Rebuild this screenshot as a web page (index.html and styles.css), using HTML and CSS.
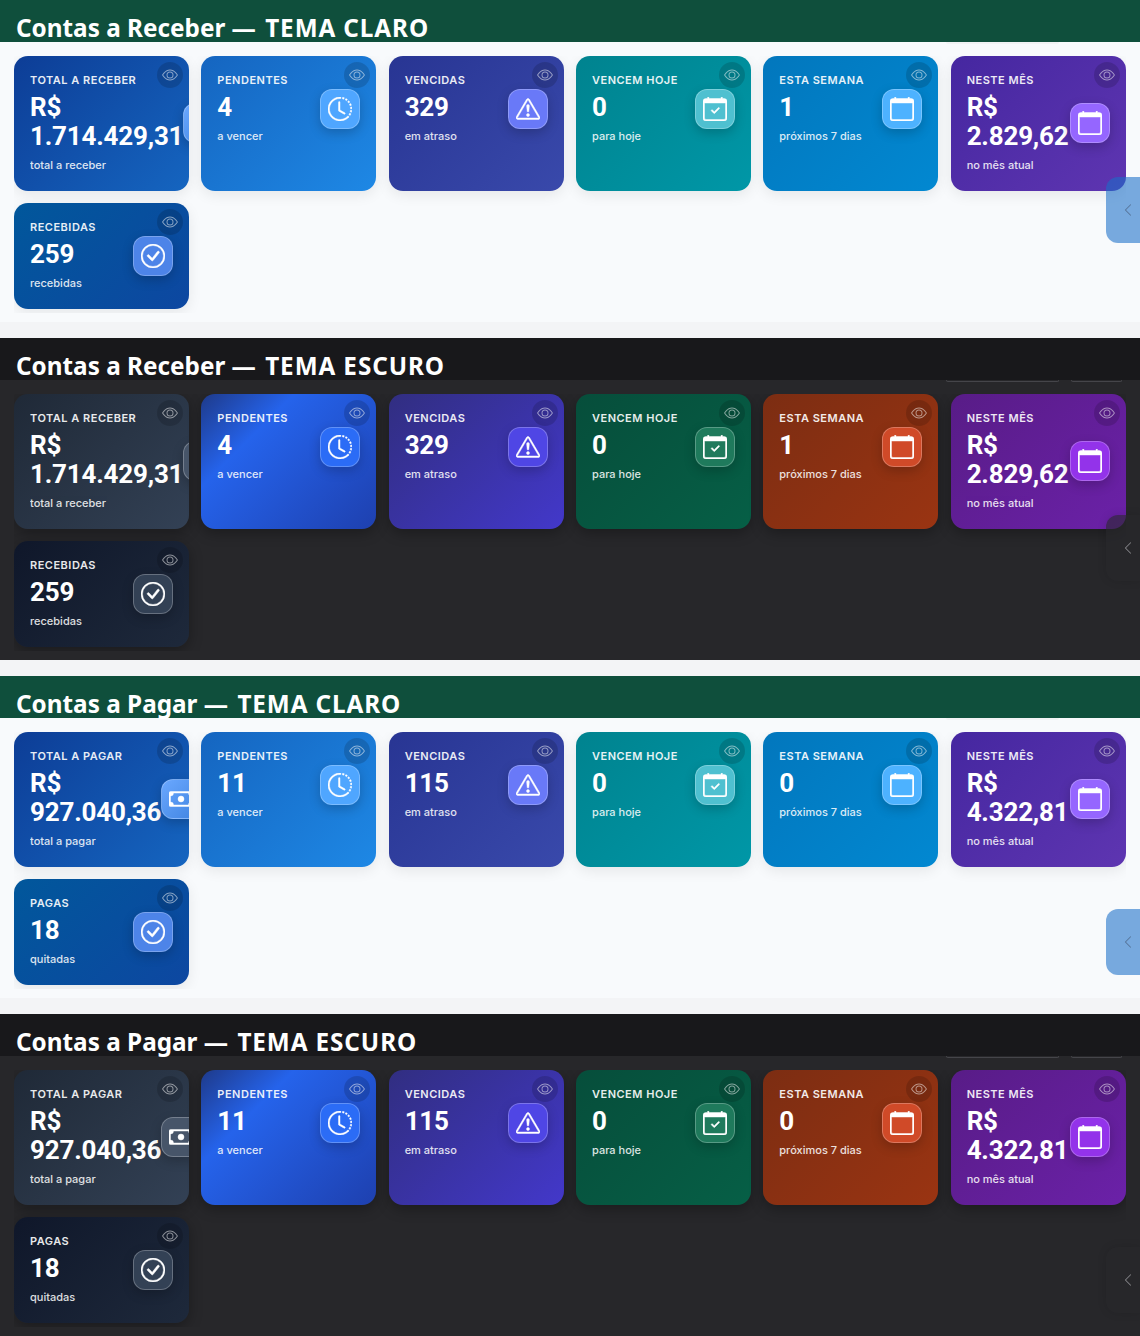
FILE: index.html
```html
<!DOCTYPE html>
<html lang="en">
<head>
    <meta charset="UTF-8">
    <meta name="viewport" content="width=device-width, initial-scale=1.0">
    <title>Contas - Temas</title>
    <link rel="stylesheet" href="styles.css">
</head>
<body>
    <svg class="sprite" xmlns="http://www.w3.org/2000/svg">
        <symbol id="i-eye" viewBox="0 0 16 16"><path d="M16 8s-3-5.5-8-5.5S0 8 0 8s3 5.5 8 5.5S16 8 16 8zM1.173 8a13.133 13.133 0 0 1 1.66-2.043C4.12 4.668 5.88 3.5 8 3.5c2.12 0 3.879 1.168 5.168 2.457A13.133 13.133 0 0 1 14.828 8c-.058.087-.122.183-.195.288-.335.48-.83 1.12-1.465 1.755C11.879 11.332 10.119 12.5 8 12.5c-2.12 0-3.879-1.168-5.168-2.457A13.134 13.134 0 0 1 1.172 8z"/><path d="M8 5.5a2.5 2.5 0 1 0 0 5 2.5 2.5 0 0 0 0-5zM4.5 8a3.5 3.5 0 1 1 7 0 3.5 3.5 0 0 1-7 0z"/></symbol>
        <symbol id="i-cash" viewBox="0 0 16 16"><path d="M8 10a2 2 0 1 0 0-4 2 2 0 0 0 0 4z"/><path d="M0 4a1 1 0 0 1 1-1h14a1 1 0 0 1 1 1v8a1 1 0 0 1-1 1H1a1 1 0 0 1-1-1V4zm3 0a2 2 0 0 1-2 2v4a2 2 0 0 1 2 2h10a2 2 0 0 1 2-2V6a2 2 0 0 1-2-2H3z"/></symbol>
        <symbol id="i-clock" viewBox="0 0 16 16"><path d="M8.515 1.019A7 7 0 0 0 8 1V0a8 8 0 0 1 .589.022l-.074.997zm2.004.45a7.003 7.003 0 0 0-.985-.299l.219-.976c.383.086.76.2 1.126.342l-.36.933zm1.37.71a7.01 7.01 0 0 0-.439-.27l.493-.87a8.025 8.025 0 0 1 .979.654l-.615.789a6.996 6.996 0 0 0-.418-.302zm1.834 1.79a6.99 6.99 0 0 0-.653-.796l.724-.69c.27.285.52.59.747.91l-.818.576zm.744 1.352a7.08 7.08 0 0 0-.214-.468l.893-.45a7.976 7.976 0 0 1 .45 1.088l-.95.313a7.023 7.023 0 0 0-.179-.483zm.53 2.507a6.991 6.991 0 0 0-.1-1.025l.985-.17c.067.386.106.778.116 1.17l-1 .025zm-.131 1.538c.033-.17.06-.339.081-.51l.993.123a7.957 7.957 0 0 1-.23 1.155l-.964-.267c.046-.165.086-.332.12-.501zm-.952 2.379c.184-.29.346-.594.486-.908l.914.405c-.16.36-.345.706-.555 1.038l-.845-.535zm-.964 1.205c.122-.122.239-.248.35-.378l.758.653a8.073 8.073 0 0 1-.401.432l-.707-.707z"/><path d="M8 1a7 7 0 1 0 4.95 11.95l.707.707A8.001 8.001 0 1 1 8 0v1z"/><path d="M7.5 3a.5.5 0 0 1 .5.5v5.21l3.248 1.856a.5.5 0 0 1-.496.868l-3.5-2A.5.5 0 0 1 7 9V3.5a.5.5 0 0 1 .5-.5z"/></symbol>
        <symbol id="i-alert" viewBox="0 0 16 16"><path d="M7.938 2.016A.13.13 0 0 1 8.002 2a.13.13 0 0 1 .063.016.146.146 0 0 1 .054.057l6.857 11.667c.036.06.035.124.002.183a.163.163 0 0 1-.054.06.116.116 0 0 1-.066.017H1.146a.115.115 0 0 1-.066-.017.163.163 0 0 1-.054-.06.176.176 0 0 1 .002-.183L7.884 2.073a.147.147 0 0 1 .054-.057zm1.044-.45a1.13 1.13 0 0 0-1.96 0L.165 13.233c-.457.778.091 1.767.98 1.767h13.713c.889 0 1.438-.99.98-1.767L8.982 1.566z"/><path d="M7.002 12a1 1 0 1 1 2 0 1 1 0 0 1-2 0zM7.1 5.995a.905.905 0 1 1 1.8 0l-.35 3.507a.552.552 0 0 1-1.1 0L7.1 5.995z"/></symbol>
        <symbol id="i-cal-check" viewBox="0 0 16 16"><path d="M10.854 7.146a.5.5 0 0 1 0 .708l-3 3a.5.5 0 0 1-.708 0l-1.5-1.5a.5.5 0 1 1 .708-.708L7.5 9.793l2.646-2.647a.5.5 0 0 1 .708 0z"/><path d="M3.5 0a.5.5 0 0 1 .5.5V1h8V.5a.5.5 0 0 1 1 0V1h1a2 2 0 0 1 2 2v11a2 2 0 0 1-2 2H2a2 2 0 0 1-2-2V3a2 2 0 0 1 2-2h1V.5a.5.5 0 0 1 .5-.5zM1 4v10a1 1 0 0 0 1 1h12a1 1 0 0 0 1-1V4H1z"/></symbol>
        <symbol id="i-cal" viewBox="0 0 16 16"><path d="M3.5 0a.5.5 0 0 1 .5.5V1h8V.5a.5.5 0 0 1 1 0V1h1a2 2 0 0 1 2 2v11a2 2 0 0 1-2 2H2a2 2 0 0 1-2-2V3a2 2 0 0 1 2-2h1V.5a.5.5 0 0 1 .5-.5zM1 4v10a1 1 0 0 0 1 1h12a1 1 0 0 0 1-1V4H1z"/></symbol>
        <symbol id="i-check" viewBox="0 0 16 16"><path d="M8 15A7 7 0 1 1 8 1a7 7 0 0 1 0 14zm0 1A8 8 0 1 0 8 0a8 8 0 0 0 0 16z"/><path d="M10.97 4.97a.235.235 0 0 0-.02.022L7.477 9.417 5.384 7.323a.75.75 0 0 0-1.06 1.06L6.97 11.03a.75.75 0 0 0 1.079-.02l3.992-4.99a.75.75 0 0 0-1.071-1.05z"/></symbol>
        <symbol id="i-chevron" viewBox="0 0 16 16"><path fill-rule="evenodd" d="M11.354 1.646a.5.5 0 0 1 0 .708L5.707 8l5.647 5.646a.5.5 0 0 1-.708.708l-6-6a.5.5 0 0 1 0-.708l6-6a.5.5 0 0 1 .708 0z"/></symbol>
    </svg>

    <!-- Contas a Receber, claro -->
    <section class="panel light">
        <h2 class="panel-title">Contas a Receber — <span class="theme-name">TEMA CLARO</span></h2>
        <span class="stub stub-a"></span>
        <div class="panel-body">
            <div class="cards">
                <div class="card total">
                    <span class="eye"><svg><use href="#i-eye"/></svg></span>
                    <div class="card-row">
                        <div class="card-text"><div class="label">Total a receber</div><div class="value">R$ 1.714.429,31</div><div class="sub">total a receber</div></div>
                        <div class="icon"><svg><use href="#i-cash"/></svg></div>
                    </div>
                </div>
                <div class="card pending">
                    <span class="eye"><svg><use href="#i-eye"/></svg></span>
                    <div class="card-row">
                        <div class="card-text"><div class="label">Pendentes</div><div class="value">4</div><div class="sub">a vencer</div></div>
                        <div class="icon"><svg><use href="#i-clock"/></svg></div>
                    </div>
                </div>
                <div class="card late">
                    <span class="eye"><svg><use href="#i-eye"/></svg></span>
                    <div class="card-row">
                        <div class="card-text"><div class="label">Vencidas</div><div class="value">329</div><div class="sub">em atraso</div></div>
                        <div class="icon"><svg><use href="#i-alert"/></svg></div>
                    </div>
                </div>
                <div class="card today">
                    <span class="eye"><svg><use href="#i-eye"/></svg></span>
                    <div class="card-row">
                        <div class="card-text"><div class="label">Vencem hoje</div><div class="value">0</div><div class="sub">para hoje</div></div>
                        <div class="icon"><svg><use href="#i-cal-check"/></svg></div>
                    </div>
                </div>
                <div class="card week">
                    <span class="eye"><svg><use href="#i-eye"/></svg></span>
                    <div class="card-row">
                        <div class="card-text"><div class="label">Esta semana</div><div class="value">1</div><div class="sub">próximos 7 dias</div></div>
                        <div class="icon"><svg><use href="#i-cal"/></svg></div>
                    </div>
                </div>
                <div class="card month">
                    <span class="eye"><svg><use href="#i-eye"/></svg></span>
                    <div class="card-row">
                        <div class="card-text"><div class="label">Neste mês</div><div class="value">R$ 2.829,62</div><div class="sub">no mês atual</div></div>
                        <div class="icon"><svg><use href="#i-cal"/></svg></div>
                    </div>
                </div>
                <div class="card done">
                    <span class="eye"><svg><use href="#i-eye"/></svg></span>
                    <div class="card-row">
                        <div class="card-text"><div class="label">Recebidas</div><div class="value">259</div><div class="sub">recebidas</div></div>
                        <div class="icon"><svg><use href="#i-check"/></svg></div>
                    </div>
                </div>
            </div>
        </div>
        <div class="side-tab tab-high"><svg><use href="#i-chevron"/></svg></div>
    </section>

    <!-- Contas a Receber, escuro -->
    <section class="panel dark">
        <h2 class="panel-title">Contas a Receber — <span class="theme-name">TEMA ESCURO</span></h2>
        <span class="stub stub-a"></span>
        <span class="stub stub-b"></span>
        <div class="panel-body">
            <div class="cards">
                <div class="card total">
                    <span class="eye"><svg><use href="#i-eye"/></svg></span>
                    <div class="card-row">
                        <div class="card-text"><div class="label">Total a receber</div><div class="value">R$ 1.714.429,31</div><div class="sub">total a receber</div></div>
                        <div class="icon"><svg><use href="#i-cash"/></svg></div>
                    </div>
                </div>
                <div class="card pending">
                    <span class="eye"><svg><use href="#i-eye"/></svg></span>
                    <div class="card-row">
                        <div class="card-text"><div class="label">Pendentes</div><div class="value">4</div><div class="sub">a vencer</div></div>
                        <div class="icon"><svg><use href="#i-clock"/></svg></div>
                    </div>
                </div>
                <div class="card late">
                    <span class="eye"><svg><use href="#i-eye"/></svg></span>
                    <div class="card-row">
                        <div class="card-text"><div class="label">Vencidas</div><div class="value">329</div><div class="sub">em atraso</div></div>
                        <div class="icon"><svg><use href="#i-alert"/></svg></div>
                    </div>
                </div>
                <div class="card today">
                    <span class="eye"><svg><use href="#i-eye"/></svg></span>
                    <div class="card-row">
                        <div class="card-text"><div class="label">Vencem hoje</div><div class="value">0</div><div class="sub">para hoje</div></div>
                        <div class="icon"><svg><use href="#i-cal-check"/></svg></div>
                    </div>
                </div>
                <div class="card week">
                    <span class="eye"><svg><use href="#i-eye"/></svg></span>
                    <div class="card-row">
                        <div class="card-text"><div class="label">Esta semana</div><div class="value">1</div><div class="sub">próximos 7 dias</div></div>
                        <div class="icon"><svg><use href="#i-cal"/></svg></div>
                    </div>
                </div>
                <div class="card month">
                    <span class="eye"><svg><use href="#i-eye"/></svg></span>
                    <div class="card-row">
                        <div class="card-text"><div class="label">Neste mês</div><div class="value">R$ 2.829,62</div><div class="sub">no mês atual</div></div>
                        <div class="icon"><svg><use href="#i-cal"/></svg></div>
                    </div>
                </div>
                <div class="card done">
                    <span class="eye"><svg><use href="#i-eye"/></svg></span>
                    <div class="card-row">
                        <div class="card-text"><div class="label">Recebidas</div><div class="value">259</div><div class="sub">recebidas</div></div>
                        <div class="icon"><svg><use href="#i-check"/></svg></div>
                    </div>
                </div>
            </div>
        </div>
        <div class="side-tab tab-high"><svg><use href="#i-chevron"/></svg></div>
    </section>

    <!-- Contas a Pagar, claro -->
    <section class="panel light">
        <h2 class="panel-title">Contas a Pagar — <span class="theme-name">TEMA CLARO</span></h2>
        <span class="stub stub-a"></span>
        <div class="panel-body">
            <div class="cards">
                <div class="card total">
                    <span class="eye"><svg><use href="#i-eye"/></svg></span>
                    <div class="card-row">
                        <div class="card-text"><div class="label">Total a pagar</div><div class="value">R$ 927.040,36</div><div class="sub">total a pagar</div></div>
                        <div class="icon"><svg><use href="#i-cash"/></svg></div>
                    </div>
                </div>
                <div class="card pending">
                    <span class="eye"><svg><use href="#i-eye"/></svg></span>
                    <div class="card-row">
                        <div class="card-text"><div class="label">Pendentes</div><div class="value">11</div><div class="sub">a vencer</div></div>
                        <div class="icon"><svg><use href="#i-clock"/></svg></div>
                    </div>
                </div>
                <div class="card late">
                    <span class="eye"><svg><use href="#i-eye"/></svg></span>
                    <div class="card-row">
                        <div class="card-text"><div class="label">Vencidas</div><div class="value">115</div><div class="sub">em atraso</div></div>
                        <div class="icon"><svg><use href="#i-alert"/></svg></div>
                    </div>
                </div>
                <div class="card today">
                    <span class="eye"><svg><use href="#i-eye"/></svg></span>
                    <div class="card-row">
                        <div class="card-text"><div class="label">Vencem hoje</div><div class="value">0</div><div class="sub">para hoje</div></div>
                        <div class="icon"><svg><use href="#i-cal-check"/></svg></div>
                    </div>
                </div>
                <div class="card week">
                    <span class="eye"><svg><use href="#i-eye"/></svg></span>
                    <div class="card-row">
                        <div class="card-text"><div class="label">Esta semana</div><div class="value">0</div><div class="sub">próximos 7 dias</div></div>
                        <div class="icon"><svg><use href="#i-cal"/></svg></div>
                    </div>
                </div>
                <div class="card month">
                    <span class="eye"><svg><use href="#i-eye"/></svg></span>
                    <div class="card-row">
                        <div class="card-text"><div class="label">Neste mês</div><div class="value">R$ 4.322,81</div><div class="sub">no mês atual</div></div>
                        <div class="icon"><svg><use href="#i-cal"/></svg></div>
                    </div>
                </div>
                <div class="card done">
                    <span class="eye"><svg><use href="#i-eye"/></svg></span>
                    <div class="card-row">
                        <div class="card-text"><div class="label">Pagas</div><div class="value">18</div><div class="sub">quitadas</div></div>
                        <div class="icon"><svg><use href="#i-check"/></svg></div>
                    </div>
                </div>
            </div>
        </div>
        <div class="side-tab tab-low"><svg><use href="#i-chevron"/></svg></div>
    </section>

    <!-- Contas a Pagar, escuro -->
    <section class="panel dark">
        <h2 class="panel-title">Contas a Pagar — <span class="theme-name">TEMA ESCURO</span></h2>
        <span class="stub stub-a"></span>
        <span class="stub stub-b"></span>
        <div class="panel-body">
            <div class="cards">
                <div class="card total">
                    <span class="eye"><svg><use href="#i-eye"/></svg></span>
                    <div class="card-row">
                        <div class="card-text"><div class="label">Total a pagar</div><div class="value">R$ 927.040,36</div><div class="sub">total a pagar</div></div>
                        <div class="icon"><svg><use href="#i-cash"/></svg></div>
                    </div>
                </div>
                <div class="card pending">
                    <span class="eye"><svg><use href="#i-eye"/></svg></span>
                    <div class="card-row">
                        <div class="card-text"><div class="label">Pendentes</div><div class="value">11</div><div class="sub">a vencer</div></div>
                        <div class="icon"><svg><use href="#i-clock"/></svg></div>
                    </div>
                </div>
                <div class="card late">
                    <span class="eye"><svg><use href="#i-eye"/></svg></span>
                    <div class="card-row">
                        <div class="card-text"><div class="label">Vencidas</div><div class="value">115</div><div class="sub">em atraso</div></div>
                        <div class="icon"><svg><use href="#i-alert"/></svg></div>
                    </div>
                </div>
                <div class="card today">
                    <span class="eye"><svg><use href="#i-eye"/></svg></span>
                    <div class="card-row">
                        <div class="card-text"><div class="label">Vencem hoje</div><div class="value">0</div><div class="sub">para hoje</div></div>
                        <div class="icon"><svg><use href="#i-cal-check"/></svg></div>
                    </div>
                </div>
                <div class="card week">
                    <span class="eye"><svg><use href="#i-eye"/></svg></span>
                    <div class="card-row">
                        <div class="card-text"><div class="label">Esta semana</div><div class="value">0</div><div class="sub">próximos 7 dias</div></div>
                        <div class="icon"><svg><use href="#i-cal"/></svg></div>
                    </div>
                </div>
                <div class="card month">
                    <span class="eye"><svg><use href="#i-eye"/></svg></span>
                    <div class="card-row">
                        <div class="card-text"><div class="label">Neste mês</div><div class="value">R$ 4.322,81</div><div class="sub">no mês atual</div></div>
                        <div class="icon"><svg><use href="#i-cal"/></svg></div>
                    </div>
                </div>
                <div class="card done">
                    <span class="eye"><svg><use href="#i-eye"/></svg></span>
                    <div class="card-row">
                        <div class="card-text"><div class="label">Pagas</div><div class="value">18</div><div class="sub">quitadas</div></div>
                        <div class="icon"><svg><use href="#i-check"/></svg></div>
                    </div>
                </div>
            </div>
        </div>
        <div class="side-tab tab-low"><svg><use href="#i-chevron"/></svg></div>
    </section>
</body>
</html>
```

FILE: styles.css
```css
* {
    margin: 0;
    padding: 0;
    box-sizing: border-box;
}

body {
    display: flex;
    flex-direction: column;
    gap: 16px;
    background: #f3f4f6;
    font-family: Inter, 'Liberation Sans', sans-serif;
    overflow: hidden;
}

.sprite {
    display: none;
}

svg {
    fill: currentColor;
}

.panel {
    position: relative;
    height: 322px;
    overflow: hidden;
}

.panel-title {
    height: 42px;
    padding: 10px 16px 0;
    color: #fff;
    font-family: 'Noto Sans', sans-serif;
    font-size: 24.3px;
    font-weight: 700;
    line-height: 36px;
}

.theme-name {
    margin-left: 3px;
    letter-spacing: 0.9px;
}

.light .panel-title { background: #0f4f3c; }
.dark .panel-title { background: #18181b; }

.panel-body {
    height: 280px;
    padding: 14px 14px 0;
}

.light .panel-body { background: #f8fafc; }
.dark .panel-body { background: #27272a; }

.stub {
    position: absolute;
    top: 42px;
    height: 2px;
    border-radius: 0 0 8px 8px;
}

.stub-a { left: 946px; width: 113px; }
.stub-b { left: 1071px; width: 51px; }
.light .stub { background: #f1f2f4; }
.dark .stub { border: 1px solid #45454a; border-top: none; }

.cards {
    display: grid;
    grid-template-columns: repeat(6, 175px);
    gap: 12px 12.33px;
    padding-bottom: 4px;
    overflow: hidden;
}

.card {
    position: relative;
    padding: 16px;
    border-radius: 14px;
    color: #fff;
    overflow: hidden;
    box-shadow: 0 4px 14px rgba(0, 0, 0, 0.08);
}

.dark .card {
    box-shadow: 0 4px 14px rgba(0, 0, 0, 0.3);
}

.card-row {
    display: flex;
    justify-content: space-between;
    align-items: center;
}

.label {
    font-size: 11px;
    font-weight: 600;
    line-height: 16px;
    letter-spacing: 0.5px;
    text-transform: uppercase;
    white-space: nowrap;
    opacity: 0.9;
}

.value {
    margin-top: 5px;
    font-family: Roboto, sans-serif;
    font-size: 26px;
    font-weight: 700;
    line-height: 1.1;
    letter-spacing: -0.2px;
}

.sub {
    margin-top: 4.4px;
    font-size: 11px;
    font-weight: 500;
    line-height: 20px;
    white-space: nowrap;
    opacity: 0.85;
}

.eye {
    position: absolute;
    top: 6px;
    right: 6px;
    display: flex;
    align-items: center;
    justify-content: center;
    width: 26px;
    height: 26px;
    border-radius: 50%;
    background: rgba(0, 0, 0, 0.15);
    color: rgba(255, 255, 255, 0.5);
}

.eye svg {
    width: 16px;
    height: 16px;
}

.icon {
    flex-shrink: 0;
    display: flex;
    align-items: center;
    justify-content: center;
    width: 40px;
    height: 40px;
    border: 1px solid rgba(255, 255, 255, 0.25);
    border-radius: 12px;
    color: #fff;
    box-shadow: 0 4px 12px rgba(0, 0, 0, 0.2);
}

.icon svg {
    flex-shrink: 0;
    width: 24px;
    height: 24px;
    stroke: currentColor;
    stroke-width: 0.3;
}

/* tema claro */
.light .total { background: linear-gradient(135deg, #0d3d96, #1565c0); }
.light .pending { background: linear-gradient(135deg, #1565c0, #1e88e5); }
.light .late { background: linear-gradient(135deg, #283593, #3949ab); }
.light .today { background: linear-gradient(135deg, #00838f, #0097a7); }
.light .week { background: linear-gradient(135deg, #0277bd, #0288d1); }
.light .month { background: linear-gradient(135deg, #4527a0, #5e35b1); }
.light .done { background: linear-gradient(135deg, #01579b, #0d47a1); }

.light .total .icon { background: linear-gradient(135deg, #6aa8ff, #3f83e0); }
.light .pending .icon { background: #4fa6ff; }
.light .late .icon { background: #6979f8; }
.light .today .icon { background: #4fc0d0; }
.light .week .icon { background: #4db2ff; }
.light .month .icon { background: #9566ff; }
.light .done .icon { background: #4d84e8; }

/* tema escuro */
.dark .total { background: linear-gradient(135deg, #1f2937, #334155); }
.dark .pending { background: linear-gradient(135deg, #1e3a8a, #2563eb 30%, #1e40af); }
.dark .late { background: linear-gradient(135deg, #312e81, #4338ca); }
.dark .today { background: linear-gradient(135deg, #064e3b, #065f46); }
.dark .week { background: linear-gradient(135deg, #7c2d12, #9a3412); }
.dark .month { background: linear-gradient(135deg, #581c87, #6b21a8); }
.dark .done { background: linear-gradient(135deg, #0f172a, #1e293b); }

.dark .total .icon { background: #475569; }
.dark .pending .icon { background: #2b6cf6; }
.dark .late .icon { background: #4f46e5; }
.dark .today .icon { background: #1f7a5c; }
.dark .week .icon { background: #d04a28; }
.dark .month .icon { background: #9333ea; }
.dark .done .icon { background: #334155; }

.side-tab {
    position: absolute;
    right: 0;
    display: flex;
    align-items: center;
    justify-content: flex-end;
    width: 34px;
    height: 66px;
    padding-right: 5px;
    border-radius: 12px 0 0 12px;
}

.tab-high { top: 177px; }
.tab-low { top: 233px; }

.side-tab svg {
    width: 14px;
    height: 14px;
}

.light .side-tab {
    background: rgba(25, 110, 200, 0.58);
    color: rgba(70, 90, 120, 0.7);
}

.dark .side-tab {
    background: rgba(40, 40, 44, 0.6);
    color: #8a8a8e;
    box-shadow: 0 0 10px rgba(0, 0, 0, 0.12);
}
```
